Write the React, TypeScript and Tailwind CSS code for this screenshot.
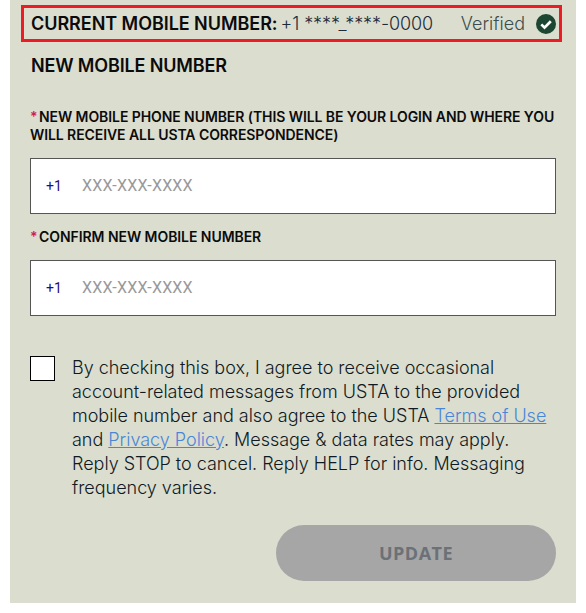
export default function App() {
  const input = (
    <div className="h-[56px] w-[526px] bg-white border border-[#555] flex items-center font-['Roboto',sans-serif] text-[16px]">
      <span className="ml-[15px] w-[36px] text-[#2a0a7a] text-[14px]">+1</span>
      <span className="text-[#999] tracking-[0.2px]">XXX-XXX-XXXX</span>
    </div>
  );
  const star = <span className="inline-block w-[9px] text-[#d01c4b]">*</span>;
  return (
    <div className="w-[586px] h-[613px] bg-white font-['Inter',sans-serif] text-[#111]">
      <div className="ml-[10px] w-[566px] h-[603px] bg-[#dbddcf] flex flex-col pt-[5px]">
        <div className="ml-[11px] w-[541px] h-[37px] border-[3px] border-[#ed1c24] flex items-center pl-[7px] pr-[3px]">
          <span className="font-semibold text-[18px] tracking-[-0.05px] text-[#0b0b0b] whitespace-nowrap">CURRENT MOBILE NUMBER:</span>
          <span className="ml-[3px] text-[18px] font-light text-[#1c2b3a] tracking-[-0.1px] whitespace-nowrap">+1 ****_****-0000</span>
          <span className="ml-auto text-[18px] font-light text-[#3c4d4d]">Verified</span>
          <svg className="ml-[11px]" width="20" height="20" viewBox="0 0 20 20">
            <circle cx="10" cy="10" r="10" fill="#1c4532" />
            <path d="M5.3 10.4 L8.5 13.6 L14.8 7.2" fill="none" stroke="#fff" strokeWidth="2.7" />
          </svg>
        </div>
        <div className="ml-[21px] mt-[12px] font-semibold text-[18px] leading-[24px] tracking-[-0.15px] text-[#0b0b0b]">NEW MOBILE NUMBER</div>
        <div className="ml-[20px] mt-[30px] font-semibold text-[14px] leading-[18px] w-[526px] tracking-[-0.08px] text-[#0b0b0b]">
          {star}NEW MOBILE PHONE NUMBER (THIS WILL BE YOUR LOGIN AND WHERE YOU WILL RECEIVE ALL USTA CORRESPONDENCE)
        </div>
        <div className="ml-[20px] mt-[14px]">{input}</div>
        <div className="ml-[20px] mt-[14px] font-semibold text-[14px] leading-[18px] tracking-[-0.06px] text-[#0b0b0b]">
          {star}CONFIRM NEW MOBILE NUMBER
        </div>
        <div className="ml-[20px] mt-[14px]">{input}</div>
        <div className="ml-[20px] mt-[40px] flex items-start">
          <div className="w-[25px] h-[25px] bg-white border border-black shrink-0" />
          <p className="ml-[17px] w-[478px] text-[18px] leading-[24px] tracking-[-0.02px] font-light text-[#0f1a24]">
            By checking this box, I agree to receive occasional account-related messages from USTA to the provided mobile number and also agree to the USTA <a className="text-[#4a86d8] underline">Terms of Use</a> and <a className="text-[#4a86d8] underline">Privacy Policy</a>. Message &amp; data rates may apply. Reply STOP to cancel. Reply HELP for info. Messaging frequency varies.
          </p>
        </div>
        <div className="ml-[266px] mt-[25px] w-[280px] h-[56px] rounded-[28px] bg-[#a6a6a6] flex items-center justify-center font-['Open_Sans',sans-serif] font-bold text-[18px] tracking-[0.5px] text-[#6b7177]">
          UPDATE
        </div>
      </div>
    </div>
  );
}
